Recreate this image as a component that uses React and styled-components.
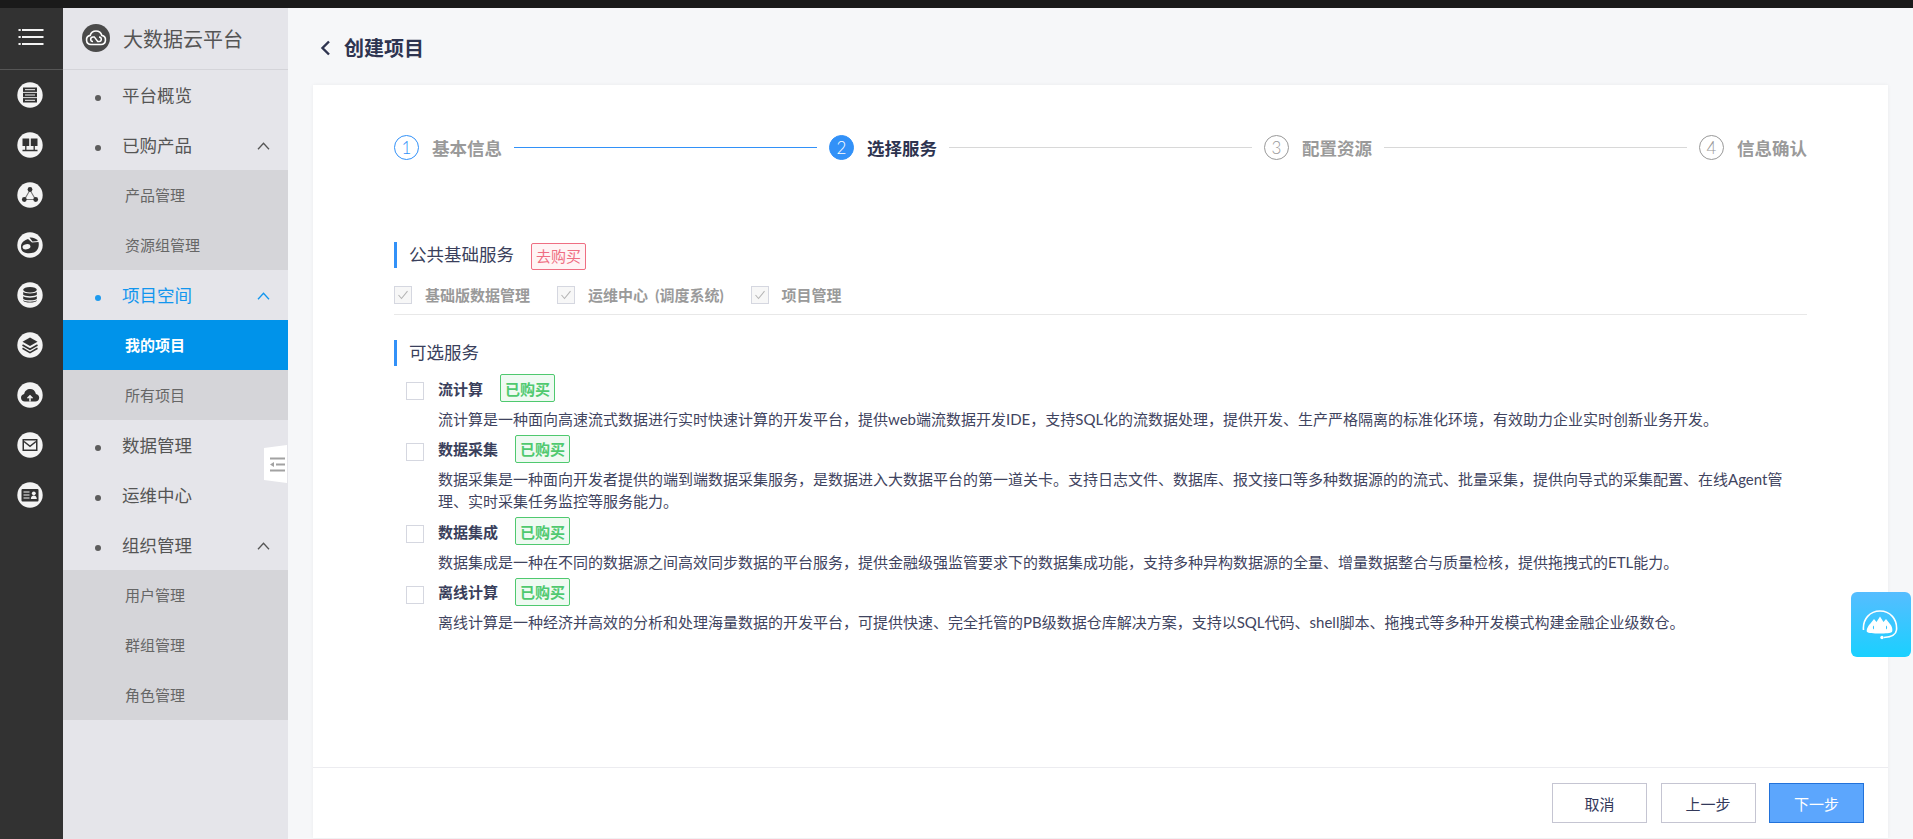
import React from "react";
import styled, { createGlobalStyle } from "styled-components";

const Global = createGlobalStyle`
  html, body { margin: 0; padding: 0; height: 100%; overflow: hidden; background: #f6f7f9; }
  body { font-family: Lato, "Noto Sans CJK SC", sans-serif; }
  * { box-sizing: border-box; }
`;

const Page = styled.div`
  width: 1913px;
  height: 839px;
  display: flex;
  flex-direction: column;
  position: relative;
  overflow: hidden;
`;
const TopBar = styled.div`height: 8px; background: #1a1a1a; flex: none;`;
const Body = styled.div`flex: 1; display: flex; min-height: 0;`;

const Rail = styled.nav`width: 63px; flex: none; background: #323232; display: flex; flex-direction: column;`;
const RailHead = styled.div`
  height: 62px; border-bottom: 1px solid #565656; padding-bottom: 3px;
  display: flex; align-items: center; justify-content: center;
`;
const RailItem = styled.div`
  height: 50px; display: flex; align-items: center; justify-content: center; padding-right: 3px;
`;

const Side = styled.aside`width: 225px; flex: none; background: #e5e5ea; position: relative;`;
const SideHead = styled.div`
  height: 62px; border-bottom: 1px solid #d4d4d9;
  display: flex; align-items: center; gap: 13px; padding: 0 0 2px 19px;
  font-size: 20px; color: #555; line-height: 28px;
`;
const SideTitle = styled.span`padding-top: 3px;`;
const MenuItem = styled.div`
  height: 50px; display: flex; align-items: center; padding: 0 0 2px 32px;
  font-size: 17.5px; color: ${p => (p.$active ? "#1296ee" : "#555")};
`;
const Dot = styled.span`
  width: 6px; height: 6px; border-radius: 50%; background: currentColor; flex: none;
  margin: 8px 21px 0 0; opacity: .95;
`;
const Chevron = styled.svg`margin: 4px 18px 0 auto; flex: none;`;
const SubItem = styled.div`
  height: 50px; display: flex; align-items: center; padding: 0 0 2px 62px; font-size: 15px;
  background: ${p => (p.$active ? "#0093ea" : "#d5d5d9")};
  color: ${p => (p.$active ? "#fff" : "#666")};
  font-weight: ${p => (p.$active ? 700 : 400)};
`;
const Handle = styled.div`
  position: absolute; left: 201px; top: 437px; width: 23px; height: 38px; background: #fff;
  clip-path: polygon(0 8%, 100% 0, 100% 100%, 0 92%);
  display: flex; align-items: center; justify-content: center; padding-left: 4px;
`;

const Main = styled.main`flex: 1; min-width: 0; padding: 0 25px 1px; display: flex; flex-direction: column; background: #f6f7f9;`;
const PageHead = styled.header`
  height: 77px; flex: none; display: flex; align-items: center; gap: 13px; padding: 2px 0 0 7px;
  font-size: 20px; font-weight: 700; color: #2e3450;
`;
const Card = styled.section`
  flex: 1; background: #fff; display: flex; flex-direction: column; min-height: 0;
  box-shadow: 0 0 4px rgba(0,0,0,.05);
`;
const Content = styled.div`flex: 1; padding: 50px 81px 0;`;

const Steps = styled.div`display: flex; align-items: center; gap: 12px; height: 25px; margin-bottom: 82px;`;
const Circle = styled.span`
  width: 25px; height: 25px; border-radius: 50%; flex: none; margin-right: 1px;
  display: flex; align-items: center; justify-content: center;
  font-size: 17px; font-weight: 300; line-height: 1;
  border: 1px solid ${p => (p.$state === "pending" ? "#999" : "#3291f8")};
  background: ${p => (p.$state === "active" ? "#3291f8" : "#fff")};
  color: ${p => (p.$state === "active" ? "#fff" : p.$state === "done" ? "#3291f8" : "#999")};
`;
const StepName = styled.span`
  font-size: 17.5px; font-weight: 700; line-height: 25px; white-space: nowrap; flex: none; padding-top: 2px;
  color: ${p => (p.$state === "active" ? "#2e3450" : "#9a9a9a")};
`;
const StepLine = styled.span`
  flex: 1; height: 1px; background: ${p => (p.$done ? "#3291f8" : "#d8d8d8")};
`;

const SectionTitle = styled.div`
  height: 26px; display: flex; align-items: center; gap: 17px;
  border-left: 3px solid #3291f8; padding: 0 0 1px 12px;
  font-size: 17.5px; color: #3a3f5c; line-height: 24px;
`;
const BuyTag = styled.span`
  width: 55px; height: 27px; display: flex; align-items: center; justify-content: center;
  border: 1px solid #ef6e82; border-radius: 2px; background: #fff4f5; color: #ef6e82;
  font-size: 15px; margin-top: 3px; flex: none;
`;
const BaseRow = styled.div`
  margin-top: 18px; padding-bottom: 10px; border-bottom: 1px solid #e8e8e8;
  display: flex; margin-bottom: 25px; box-sizing: content-box; height: 18px;
`;
const BaseItem = styled.div`
  display: flex; align-items: center; gap: 13px; margin-right: 27px;
  font-size: 15px; font-weight: 700; color: #9a9a9a; line-height: 18px; white-space: nowrap;
`;
const CheckBox = styled.span`
  width: 18px; height: 18px; flex: none; border: 1px solid #d5d7e0; background: ${p => (p.$disabled ? "#f7f7f7" : "#fff")};
  display: flex; align-items: center; justify-content: center;
`;

const Services = styled.div`padding: 8px 0 0 12px;`;
const Service = styled.div`display: grid; grid-template-columns: 18px 1fr; column-gap: 14px; padding-bottom: 5px;`;
const BoxCell = styled.div`padding-top: 8px;`;
const ServiceHead = styled.div`
  height: 28px; display: flex; align-items: center; gap: 17px;
  font-size: 15px; font-weight: 700; color: #3a3f5c;
`;
const Bought = styled.span`
  width: 55px; height: 28px; display: flex; align-items: center; justify-content: center;
  border: 1px solid #4fc96f; border-radius: 2px; background: #effaf2; color: #4fc96f;
  font-size: 15px; font-weight: 700;
`;
const Desc = styled.p`
  margin: 5.5px 0 0; font-size: 15px; line-height: 22px; color: #3f4460;
`;

const Footer = styled.footer`
  height: 71px; flex: none; border-top: 1px solid #ececf0;
  display: flex; justify-content: flex-end; align-items: flex-start; gap: 13.5px;
  padding: 15px 24px 0 0;
`;
const Btn = styled.button`
  width: 95px; height: 40px; font: inherit; font-size: 15px; cursor: pointer; padding: 0;
  background: ${p => (p.$primary ? "#5ca6fd" : "#fff")};
  border: 1px solid ${p => (p.$primary ? "#2272da" : "#c5c5d2")};
  color: ${p => (p.$primary ? "#fff" : "#33395a")};
`;
const Support = styled.div`
  position: absolute; left: 1851px; top: 592px; width: 60px; height: 65px; border-radius: 6px;
  background: linear-gradient(180deg, #56bdff, #1ad0ff);
  display: flex; align-items: center; justify-content: center;
`;

const Ic = ({ children }) => (
  <svg width="26" height="26" viewBox="0 0 26 26">
    <circle cx="13" cy="13" r="12.7" fill="#f3f3f3" />
    {children}
  </svg>
);
const D = "#323232";
const L = "#f3f3f3";
const railIcons = [
  <Ic key="a">
    <rect x="6" y="5.500" width="14" height="4.400" fill={D} />
    <rect x="6" y="10.800" width="14" height="4.400" fill={D} />
    <rect x="6" y="16.100" width="14" height="4.400" fill={D} />
    <path d="M8 7.700h10M8 13h10M8 18.300h10" stroke={L} strokeWidth="1" />
  </Ic>,
  <Ic key="b">
    <rect x="5.500" y="6.500" width="6.700" height="7.500" fill={D} />
    <rect x="13.800" y="6.500" width="6.700" height="7.500" fill={D} />
    <path d="M8.800 14v4M17.200 14v4M5.500 18.500h15" stroke={D} strokeWidth="1.300" fill="none" />
  </Ic>,
  <Ic key="c">
    <path d="M13 8L7.500 17.500h11z" fill="none" stroke="#777" strokeWidth="1.100" />
    <circle cx="13" cy="7.500" r="2.400" fill={D} />
    <circle cx="7.300" cy="17.500" r="2.400" fill={D} />
    <circle cx="18.700" cy="17.500" r="2.400" fill={D} />
  </Ic>,
  <Ic key="d">
    <path d="M4 14.500C4 10.500 8 7.800 11 7l4 3.500 6.500-.5c1 4-.5 9-4.500 10.500-5 1.500-11.500 1-12.800-3.500z" fill={D} />
    <path d="M12.500 5.500c3.500-.3 7 1 8.500 3.500l-5.500.5z" fill={D} />
    <ellipse cx="9.500" cy="14.700" rx="4" ry="2.600" fill={L} transform="rotate(-10 9.500 14.700)" />
  </Ic>,
  <Ic key="e">
    <ellipse cx="13" cy="7.800" rx="6.800" ry="2.800" fill={D} />
    <path d="M6.200 10.100c1.300 1.800 12.300 1.800 13.600 0v2.600c-1.300 1.900-12.300 1.900-13.600 0zM6.200 14.300c1.300 1.800 12.300 1.800 13.600 0v2.600c-1.300 1.900-12.300 1.900-13.600 0zM6.200 18.300c1.300 1.800 12.300 1.800 13.600 0v.5c-1 2.400-12.600 2.400-13.600 0z" fill={D} />
  </Ic>,
  <Ic key="f">
    <path d="M13 5.500l7.500 4.300-7.500 4.300-7.500-4.300z" fill={D} />
    <path d="M5.500 13l7.500 4.300 7.500-4.300M5.500 16.300l7.500 4.300 7.500-4.300" fill="none" stroke={D} strokeWidth="1.600" />
  </Ic>,
  <Ic key="g">
    <path d="M8 19.500c-2.400 0-4-1.700-4-3.800 0-2 1.500-3.500 3.200-3.700.4-3 3-5 5.900-5 2.900 0 5.300 2 5.800 4.900 2 .2 3.300 1.900 3.300 3.800 0 2.100-1.600 3.800-4 3.800z" fill={D} />
    <path d="M13 19.500v-5M10.500 16.300l2.500-2.500 2.500 2.500" fill="none" stroke={L} strokeWidth="1.500" />
  </Ic>,
  <Ic key="h">
    <rect x="5.500" y="7" width="15" height="12" fill={D} />
    <rect x="7" y="8.500" width="12" height="9" fill={L} />
    <path d="M7 9.500l6 4.800 6-4.800" fill="none" stroke={D} strokeWidth="1.500" />
  </Ic>,
  <Ic key="i">
    <rect x="4.500" y="7" width="17" height="12.500" rx="1" fill={D} />
    <path d="M6.500 10h6M6.500 13h6M6.500 16h6" stroke={L} strokeWidth="1.200" />
    <circle cx="16.800" cy="11.300" r="1.900" fill={L} />
    <path d="M13.800 17c.2-2.500 1.500-3.400 3-3.400s2.800.9 3 3.400z" fill={L} />
  </Ic>,
];

const Up = () => (
  <Chevron width="13" height="8" viewBox="0 0 13 8">
    <polyline points="1,7.200 6.500,1.200 12,7.200" fill="none" stroke="currentColor" strokeWidth="1.300" />
  </Chevron>
);

const Tick = () => (
  <svg width="12" height="10" viewBox="0 0 12 10">
    <polyline points="1.500,5 4.500,8.500 10.500,1.200" fill="none" stroke="#b5b5b5" strokeWidth="1.100" />
  </svg>
);

const steps = [
  ["1", "基本信息", "done"],
  ["2", "选择服务", "active"],
  ["3", "配置资源", "pending"],
  ["4", "信息确认", "pending"],
];

const services = [
  ["流计算", "流计算是一种面向高速流式数据进行实时快速计算的开发平台，提供web端流数据开发IDE，支持SQL化的流数据处理，提供开发、生产严格隔离的标准化环境，有效助力企业实时创新业务开发。"],
  ["数据采集", "数据采集是一种面向开发者提供的端到端数据采集服务，是数据进入大数据平台的第一道关卡。支持日志文件、数据库、报文接口等多种数据源的的流式、批量采集，提供向导式的采集配置、在线Agent管理、实时采集任务监控等服务能力。"],
  ["数据集成", "数据集成是一种在不同的数据源之间高效同步数据的平台服务，提供金融级强监管要求下的数据集成功能，支持多种异构数据源的全量、增量数据整合与质量检核，提供拖拽式的ETL能力。"],
  ["离线计算", "离线计算是一种经济并高效的分析和处理海量数据的开发平台，可提供快速、完全托管的PB级数据仓库解决方案，支持以SQL代码、shell脚本、拖拽式等多种开发模式构建金融企业级数仓。"],
];

export default function App() {
  return (
    <Page>
      <Global />
      <TopBar />
      <Body>
        <Rail>
          <RailHead>
            <svg width="27" height="18" viewBox="0 0 27 18">
              <path d="M4 2h21.500M4 9h21.500M4 16h21.500" stroke="#f3f3f3" strokeWidth="2" />
              <path d="M.5 2h2.200M.5 9h2.200M.5 16h2.200" stroke="#f3f3f3" strokeWidth="2" />
            </svg>
          </RailHead>
          {railIcons.map((icon, i) => <RailItem key={i}>{icon}</RailItem>)}
        </Rail>
        <Side>
          <SideHead>
            <svg width="28" height="28" viewBox="0 0 28 28">
              <circle cx="14" cy="14" r="14" fill="#4a4a4a" />
              <path d="M9 20.500a4.600 4.600 0 0 1-.8-9.100 6 6 0 0 1 11.600 0 4.600 4.600 0 0 1-.8 9.100z" fill="none" stroke="#fff" strokeWidth="1.600" />
              <path d="M11 17.500a2.300 2.300 0 0 1 0-4.600h1.300l3.400 4.600H17a2.300 2.300 0 0 0 0-4.600" fill="none" stroke="#fff" strokeWidth="1.500" />
            </svg>
            <SideTitle>大数据云平台</SideTitle>
          </SideHead>
          <MenuItem><Dot />平台概览</MenuItem>
          <MenuItem><Dot />已购产品<Up /></MenuItem>
          <SubItem>产品管理</SubItem>
          <SubItem>资源组管理</SubItem>
          <MenuItem $active><Dot />项目空间<Up /></MenuItem>
          <SubItem $active>我的项目</SubItem>
          <SubItem>所有项目</SubItem>
          <MenuItem><Dot />数据管理</MenuItem>
          <MenuItem><Dot />运维中心</MenuItem>
          <MenuItem><Dot />组织管理<Up /></MenuItem>
          <SubItem>用户管理</SubItem>
          <SubItem>群组管理</SubItem>
          <SubItem>角色管理</SubItem>
          <Handle>
            <svg width="15" height="15" viewBox="0 0 15 15">
              <path d="M0 1.500h15M6 7.500h9M0 13.500h15" stroke="#a2a2a2" strokeWidth="2" />
              <path d="M0 7.500l4-2.500v5z" fill="#a2a2a2" />
            </svg>
          </Handle>
        </Side>
        <Main>
          <PageHead>
            <svg width="11" height="16" viewBox="0 0 11 16">
              <polyline points="9,1.500 2.500,8 9,14.500" fill="none" stroke="#2e3450" strokeWidth="2.400" />
            </svg>
            创建项目
          </PageHead>
          <Card>
            <Content>
              <Steps>
                {steps.map(([n, name, state], i) => (
                  <React.Fragment key={n}>
                    <Circle $state={state}>{n}</Circle>
                    <StepName $state={state}>{name}</StepName>
                    {i < 3 && <StepLine $done={i === 0} />}
                  </React.Fragment>
                ))}
              </Steps>
              <SectionTitle>公共基础服务<BuyTag>去购买</BuyTag></SectionTitle>
              <BaseRow>
                <BaseItem><CheckBox $disabled><Tick /></CheckBox>基础版数据管理</BaseItem>
                <BaseItem><CheckBox $disabled><Tick /></CheckBox>运维中心&nbsp;&nbsp;(调度系统)</BaseItem>
                <BaseItem><CheckBox $disabled><Tick /></CheckBox>项目管理</BaseItem>
              </BaseRow>
              <SectionTitle>可选服务</SectionTitle>
              <Services>
                {services.map(([name, desc]) => (
                  <Service key={name}>
                    <BoxCell><CheckBox /></BoxCell>
                    <div>
                      <ServiceHead>{name}<Bought>已购买</Bought></ServiceHead>
                      <Desc>{desc}</Desc>
                    </div>
                  </Service>
                ))}
              </Services>
            </Content>
            <Footer>
              <Btn>取消</Btn>
              <Btn>上一步</Btn>
              <Btn $primary>下一步</Btn>
            </Footer>
          </Card>
        </Main>
      </Body>
      <Support>
        <svg width="38" height="30" viewBox="0 0 38 30">
          <path d="M1.500 20C.5 9 8 1 18 1s17.500 8 16.500 19c-.5 5-5.500 7-12.500 7.500" fill="none" stroke="#fff" strokeWidth="1.600" />
          <circle cx="20" cy="27.500" r="1.700" fill="#fff" />
          <path d="M5 22c-1-2 1-6 3-8l4-5 2.500 3L18 6.500l3.500 5.500L24 9l4 5c2 2 3 6 2 8-2 2-23 2-25 0z" fill="#fff" />
          <path d="M12 15.500c-1.500.6-1.500 3.400 0 4zM24 15.500c1.500.6 1.500 3.400 0 4z" fill="#38c4ff" />
        </svg>
      </Support>
    </Page>
  );
}
